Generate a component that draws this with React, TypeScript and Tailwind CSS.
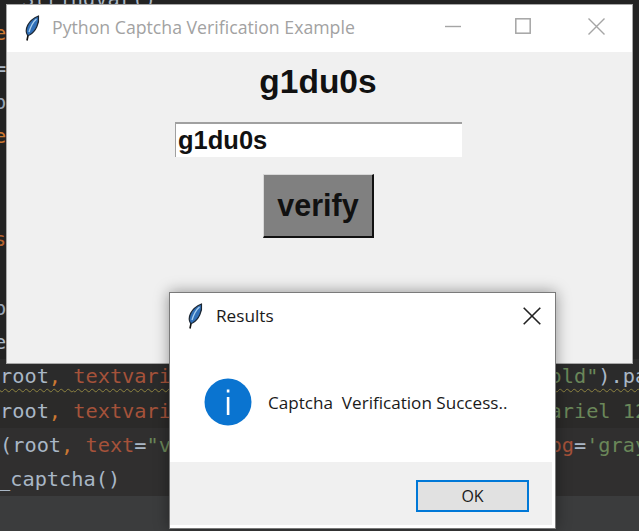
const Feather = ({ className }: { className: string }) => (
  <svg viewBox="0 0 16 26" className={className}>
    <path d="M4.2 19.5 L3 25.5" stroke="#111" strokeWidth="1.6" fill="none" />
    <path
      d="M3.6 20.5 C0.2 15 3.5 5.5 14.5 1 C15.5 8 12 16.5 5.5 20 Z"
      fill="#2f6fb8"
      stroke="#1c2733"
      strokeWidth="1.2"
    />
    <path d="M5 17 C6.5 12 9 7 12.5 4" stroke="#a9d0ef" strokeWidth="1.3" fill="none" />
  </svg>
);

const Code = ({ children, className = "" }: { children?: React.ReactNode; className?: string }) => (
  <div className={`h-[34.3px] leading-[34.3px] whitespace-pre ${className}`}>{children}</div>
);

const gray = "text-[#a9b7c6]";
const comma = "text-[#cc7832]";
const arg = "text-[#a5523a]";
const str = "text-[#6a8759]";

function CodeBackground() {
  return (
    <div className="w-full h-full overflow-hidden bg-[#232323] font-['DejaVu_Sans_Mono',monospace] text-[20.3px]">
      <div className="-mt-[18px]">
        <Code className={`${gray} pl-[22px]`}>StringVar()</Code>
        <Code className={`${comma} -ml-[6px]`}>e</Code>
        <Code className={`${gray} -ml-[6px]`}>=</Code>
        <Code className="text-[#9aa7b8] -ml-[6px]">p</Code>
        <Code className={`${comma} -ml-[6px]`}>e</Code>
        <Code />
        <Code className={str}>{"                                                    '"}</Code>
        <Code className="text-[#b5622f] -ml-[6px]">s</Code>
        <Code className={str}>{"                                                    '"}</Code>
        <Code className="text-[#9aa7b8] -ml-[6px]">p</Code>
        <Code className={`${gray} -ml-[6px]`}>e</Code>
      </div>
      <div className="bg-[#2b2a29]">
        <Code className="bg-[#2b2b2b]">
          <span className="underline decoration-wavy decoration-1 decoration-[#8f8340] underline-offset-[5px]">
            <span className={gray}>root</span>
            <span className={comma}>, </span>
            <span className={arg}>textvariable</span>
            <span className={gray}>=captcha1</span>
            <span className={comma}>, </span>
            <span className={arg}>font</span>
            <span className={gray}>=</span>
            <span className={str}>"ariel 22 bold"</span>
            <span className={gray}>).pa</span>
          </span>
        </Code>
        <Code>
          <span className={gray}>root</span>
          <span className={comma}>, </span>
          <span className={arg}>textvariable</span>
          <span className={gray}>=entered_text</span>
          <span className={comma}>, </span>
          <span className={arg}>bd</span>
          <span className={gray}>=2</span>
          <span className={comma}>, </span>
          <span className={arg}>font</span>
          <span className={gray}>=</span>
          <span className={str}>"ariel 12</span>
        </Code>
      </div>
      <div className="bg-[#302f2f]">
        <Code>
          <span className={gray}>(root</span>
          <span className={comma}>, </span>
          <span className={arg}>text</span>
          <span className={gray}>=</span>
          <span className={str}>"verify"</span>
          <span className={comma}>, </span>
          <span className={arg}>font</span>
          <span className={gray}>=</span>
          <span className={str}>"ariel 22 bold"</span>
          <span className={comma}>,  </span>
          <span className={arg}>bg</span>
          <span className={gray}>=</span>
          <span className={str}>'gray</span>
        </Code>
        <Code className={`${gray} -ml-[2px]`}>_captcha()</Code>
      </div>
      <div className="h-[40px] bg-[#3b3c3d]" />
    </div>
  );
}

function MainWindow() {
  return (
    <div className="absolute left-[6px] top-[4px] w-[627px] h-[360px] flex flex-col bg-[#f0f0f0] border border-[#a8a8a8]">
      <div className="h-[47px] bg-white flex items-center shrink-0">
        <Feather className="w-[16px] h-[26px] ml-[17px] -mt-[2px]" />
        <span className="ml-[12px] -mt-[3px] text-[17.7px] leading-[24px] text-[#a2a2a2] font-['Open_Sans',sans-serif] whitespace-nowrap">
          Python Captcha Verification Example
        </span>
        <div className="ml-auto flex items-center -mt-[5px]">
          <svg width="16" height="16" viewBox="0 0 16 16" className="mr-[54px]">
            <path d="M0 8.5 H16" stroke="#a5a5a5" strokeWidth="1.4" />
          </svg>
          <svg width="16" height="16" viewBox="0 0 16 16" className="mr-[57px]">
            <rect x="0.8" y="0.8" width="14.4" height="14.4" fill="none" stroke="#a5a5a5" strokeWidth="1.5" />
          </svg>
          <svg width="17" height="17" viewBox="0 0 17 17" className="mr-[27px]">
            <path d="M0.5 0.5 L16.5 16.5 M16.5 0.5 L0.5 16.5" stroke="#a5a5a5" strokeWidth="1.4" />
          </svg>
        </div>
      </div>
      <div className="flex flex-col items-center font-['Liberation_Sans',Arial,sans-serif] font-bold text-[#111] pt-[11px] pr-[2px]">
        <div className="text-[33.5px] leading-[38px] h-[38px] pr-[1px]">g1du0s</div>
        <div className="mt-[21px] w-[287px] h-[35px] bg-white border-t-2 border-l border-[#a0a0a0] pl-[2px] text-[25.5px] leading-[32px]">
          g1du0s
        </div>
        <div className="mt-[17px] w-[111px] h-[64px] flex items-center justify-center bg-[#808080] border-t border-l border-[#d8d8d8] border-r-2 border-b-2 border-r-[#111] border-b-[#111] text-[30.5px]">
          verify
        </div>
      </div>
    </div>
  );
}

function ResultsDialog() {
  return (
    <div className="absolute left-[169px] top-[292px] w-[387px] h-[237px] flex flex-col bg-white border border-[#7a7a7a] shadow-[0_0_14px_rgba(0,0,0,0.4)] font-['Open_Sans',sans-serif]">
      <div className="h-[46px] flex items-center shrink-0">
        <Feather className="w-[16px] h-[26px] ml-[17px]" />
        <span className="ml-[13px] text-[17.2px] text-[#1a1a1a]">Results</span>
        <svg width="18" height="18" viewBox="0 0 18 18" className="ml-auto mr-[14px]">
          <path d="M0.7 0.7 L17.3 17.3 M17.3 0.7 L0.7 17.3" stroke="#222" strokeWidth="1.6" />
        </svg>
      </div>
      <div className="flex-1 flex items-center pl-[34px] pt-[2px]">
        <svg width="48" height="48" viewBox="0 0 48 48" className="shrink-0">
          <circle cx="24" cy="24" r="23.5" fill="#0a74d0" />
          <rect x="22.8" y="19" width="2.6" height="18" fill="#fff" />
          <rect x="22.8" y="11.5" width="2.6" height="3" fill="#fff" />
        </svg>
        <span className="ml-[16px] mt-[2px] text-[17.1px] text-[#1a1a1a] whitespace-pre">Captcha  Verification Success..</span>
      </div>
      <div className="h-[63px] mb-[3px] mr-[3px] bg-[#f0f0f0] flex justify-end items-start pt-[18px] pr-[23px] shrink-0">
        <div className="w-[113px] h-[32px] flex items-center justify-center bg-[#e1e1e1] border-2 border-[#0078d7] text-[16px] text-[#1a1a1a]">
          OK
        </div>
      </div>
    </div>
  );
}

export default function App() {
  return (
    <div className="relative w-[639px] h-[531px] overflow-hidden">
      <CodeBackground />
      <MainWindow />
      <ResultsDialog />
    </div>
  );
}
